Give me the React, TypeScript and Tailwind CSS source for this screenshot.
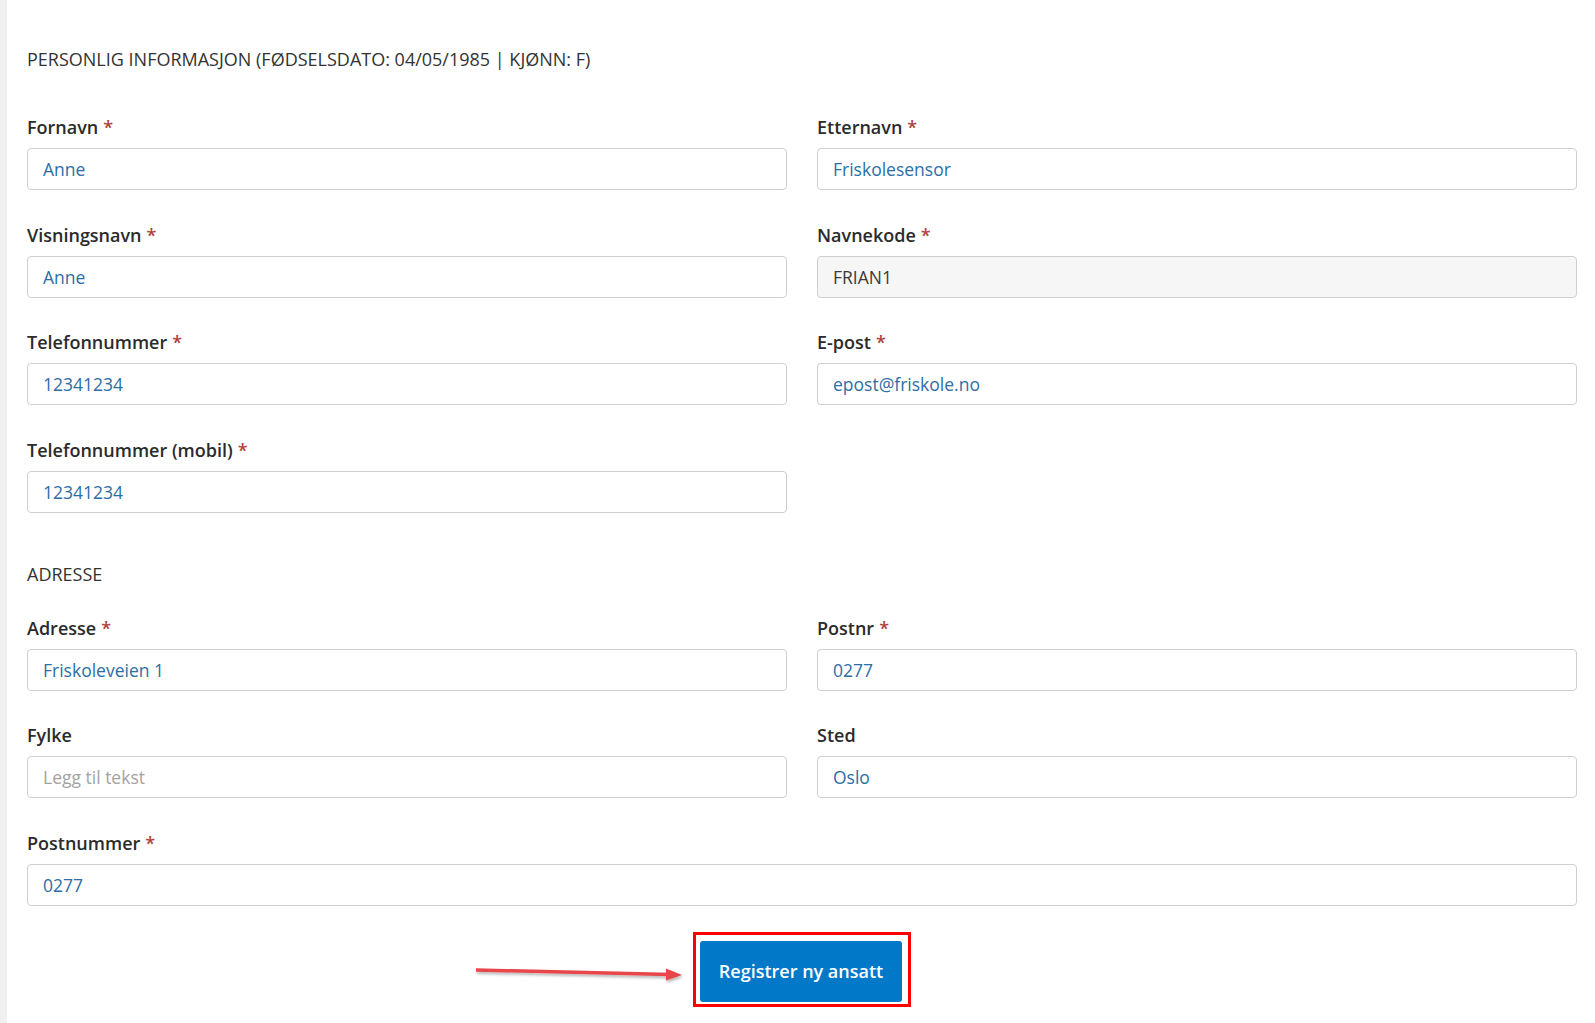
import React from "react";

type Field = {
	label: string;
	value?: string;
	placeholder?: string;
	required?: boolean;
	disabled?: boolean;
	full?: boolean;
};

const personalFields: (Field | null)[] = [
	{ label: "Fornavn", value: "Anne", required: true },
	{ label: "Etternavn", value: "Friskolesensor", required: true },
	{ label: "Visningsnavn", value: "Anne", required: true },
	{ label: "Navnekode", value: "FRIAN1", required: true, disabled: true },
	{ label: "Telefonnummer", value: "12341234", required: true },
	{ label: "E-post", value: "epost@friskole.no", required: true },
	{ label: "Telefonnummer (mobil)", value: "12341234", required: true },
	null,
];

const addressFields: (Field | null)[] = [
	{ label: "Adresse", value: "Friskoleveien 1", required: true },
	{ label: "Postnr", value: "0277", required: true },
	{ label: "Fylke", placeholder: "Legg til tekst" },
	{ label: "Sted", value: "Oslo" },
	{ label: "Postnummer", value: "0277", required: true, full: true },
];

function FormField({ field }: { field: Field }) {
	return (
		<div className={field.full ? "col-span-2" : ""}>
			<label className="block text-[18px] leading-[25px] font-semibold text-[#2b2b2b] mb-[8px]">
				{field.label}
				{field.required && <span className="text-[#b0403c] ml-[5px]">*</span>}
			</label>
			<input
				type="text"
				defaultValue={field.value}
				placeholder={field.placeholder}
				readOnly={field.disabled}
				className={`w-full h-[42px] rounded-[4px] border border-[#cfcfcf] px-[15px] text-[17.5px] outline-none placeholder:text-[#a3a3a3] ${
					field.disabled ? "bg-[#f6f6f6] text-[#3a3a3a]" : "bg-white text-[#2c6ea6]"
				}`}
			/>
		</div>
	);
}

function FieldGrid({ fields }: { fields: (Field | null)[] }) {
	return (
		<div className="grid grid-cols-2 gap-x-[30px] gap-y-[32.5px]">
			{fields.map((field, i) =>
				field ? <FormField key={field.label} field={field} /> : <div key={i} />,
			)}
		</div>
	);
}

export default function App() {
	return (
		<div className="flex min-h-[1023px] bg-white font-['Open_Sans',sans-serif]">
			<div className="w-[7px] shrink-0 bg-[#f0f0f0]" />
			<div className="flex-1 pl-[20px] pr-[18px]">
				<h2 className="pt-[47px] text-[18px] leading-[24px] font-normal text-[#333]">
					PERSONLIG INFORMASJON (FØDSELSDATO: 04/05/1985 | KJØNN: F)
				</h2>
				<div className="mt-[44px]">
					<FieldGrid fields={personalFields} />
				</div>

				<h2 className="mt-[49px] text-[18px] leading-[24px] font-normal text-[#333]">
					ADRESSE
				</h2>
				<div className="mt-[30px]">
					<FieldGrid fields={addressFields} />
				</div>

				<div className="flex justify-center mt-[26px]">
					<div className="relative border-[3px] border-[#ff0000] pt-[6px] pb-[2px] pl-[4px] pr-[6px]">
						<svg
							className="absolute right-[calc(100%+10px)] top-[30px]"
							width="212"
							height="20"
							viewBox="0 0 212 20"
						>
							<defs>
								<filter id="arrowShadow" x="-5%" y="-50%" width="110%" height="200%">
									<feDropShadow dx="1" dy="2" stdDeviation="1.5" floodColor="#000" floodOpacity="0.3" />
								</filter>
							</defs>
							<g filter="url(#arrowShadow)">
								<line x1="2" y1="5" x2="196" y2="9.5" stroke="#e8474a" strokeWidth="3.5" />
								<polygon points="192,3.5 208,10 192,15.5" fill="#e8474a" />
							</g>
						</svg>
						<button className="w-[202px] h-[61px] rounded-[3px] bg-[#0278c9] text-white text-[18px] font-semibold">
							Registrer ny ansatt
						</button>
					</div>
				</div>
			</div>
		</div>
	);
}
